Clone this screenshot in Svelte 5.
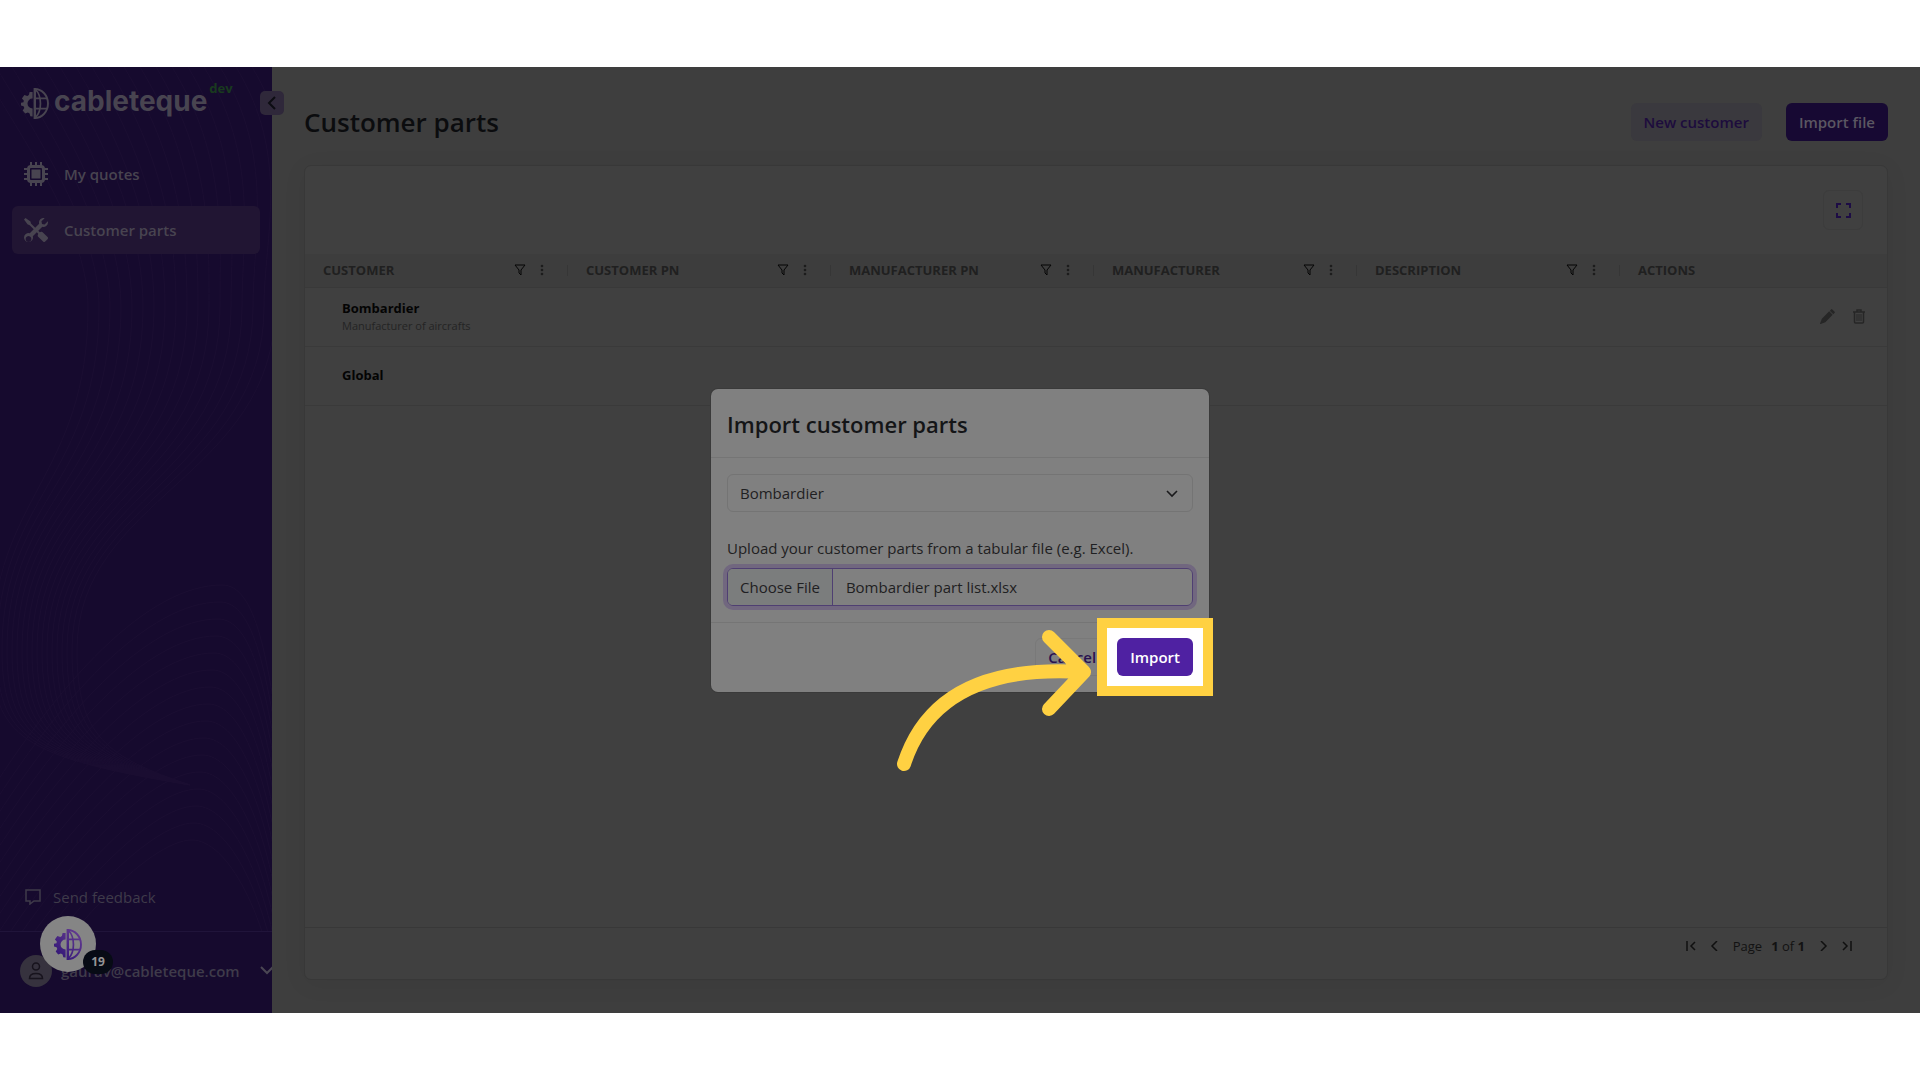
<script>
  import { onMount } from 'svelte';

  const columns = ['Customer', 'Customer PN', 'Manufacturer PN', 'Manufacturer', 'Description', 'Actions'];

  const customers = [
    { name: 'Bombardier', description: 'Manufacturer of aircrafts', editable: true },
    { name: 'Global', description: '', editable: false }
  ];

  let customer = $state('Bombardier');
  let fileInput;

  // Curves of the sidebar background
  const waves = Array.from({ length: 18 }, (_, i) => {
    const a = i * 16 - 20;
    const b = 88 + i * 11;
    const c = i * 5 - 8;
    return `M${a} 0C${a + 55} 90 ${b} 170 ${b} 240C${b} 410 ${c} 430 ${c} 583C${c} 670 ${c + 30} 690 190 718`;
  });
  const hills = Array.from({ length: 16 }, (_, j) => {
    const y = 518 + j * 17;
    const x = 222 - j * 2;
    return `M-30 ${y + 240}C60 ${y + 90} 150 ${y} ${x} ${y}C${x + 34} ${y} 268 ${y + 70} 284 ${y + 190}`;
  });

  // Preselect the part list in the file box
  onMount(() => {
    const transfer = new DataTransfer();
    transfer.items.add(new File(['parts'], 'Bombardier part list.xlsx'));
    fileInput.files = transfer.files;
  });
</script>

{#snippet logo(fill)}
  <svg class="logo-mark" viewBox="0 0 28 31" aria-hidden="true">
    <defs>
      <linearGradient id="brand" gradientUnits="userSpaceOnUse" x1="0" y1="31" x2="28" y2="0">
        <stop offset="0" stop-color="#2b1173" />
        <stop offset="1" stop-color="#6a3f94" />
      </linearGradient>
    </defs>
    <path
      {fill}
      d="M11.6 4H8.600L7.900 7 6.300 8 3.400 7 .900 10.600 2.800 12.600 2.500 14.200 0 14.800V17.400l2.600.8.7 1.800-1.600 2.400 2.500 3.200 2.700-1 1.700 1 .7 2.700 2.300.2V20.600a5.100 5.100 0 0 1 0-10.200z"
    />
    <g fill="none" stroke={fill}>
      <path stroke-width="2.400" d="M13.800 0v31" />
      <path stroke-width="1.900" d="M13.800 1a13.200 14.500 0 0 1 0 29" />
      <path stroke-width="1.700" d="M14.500 1.500c6.600 6.500 6.600 21.500 0 28M14 10.300h12M14 20.700h12" />
    </g>
  </svg>
{/snippet}

<div class="page">
  <div class="stage">
    <aside class="sidebar">
      <svg class="waves" viewBox="0 0 272 946" preserveAspectRatio="xMinYMin slice" aria-hidden="true">
        {#each waves as d}<path {d} />{/each}
        {#each hills as d}<path {d} />{/each}
      </svg>

      <div class="brand">
        {@render logo('#484450')}
        <span class="brand-name">cableteque</span>
        <span class="brand-env">dev</span>
      </div>

      <button class="collapse" aria-label="Collapse sidebar">
        <svg width="10" height="14" viewBox="0 0 10 14"><path d="M8 1 2 7l6 6" /></svg>
      </button>

      <nav class="nav">
        <a class="nav-item" href="#quotes">
          <svg width="24" height="24" viewBox="0 0 24 24" fill="none" stroke="currentColor">
            <path stroke-width="2" d="M7 0v5M12 0v5M17 0v5M7 19v5M12 19v5M17 19v5M0 7h5M0 12h5M0 17h5M19 7h5M19 12h5M19 17h5" />
            <rect x="4.500" y="4.500" width="15" height="15" rx="2.500" stroke-width="3" />
            <rect x="7.500" y="7.500" width="9" height="9" fill="currentColor" stroke="none" />
          </svg>
          My quotes
        </a>
        <a class="nav-item active" href="#parts">
          <svg width="24" height="24" viewBox="0 0 16 16" fill="currentColor">
            <path d="M1 0 0 1l2.200 3.081a1 1 0 0 0 .815.419h.07a1 1 0 0 1 .708.293l2.675 2.675-2.617 2.654A3.003 3.003 0 0 0 0 13a3 3 0 1 0 5.878-.851l2.654-2.617.968.968-.305.914a1 1 0 0 0 .242 1.023l3.270 3.270a.997.997 0 0 0 1.414 0l1.586-1.586a.997.997 0 0 0 0-1.414l-3.270-3.270a1 1 0 0 0-1.023-.242L10.500 9.500l-.960-.960 2.680-2.643A3.005 3.005 0 0 0 16 3q0-.405-.102-.777l-2.140 2.141L12 4l-.364-1.757L13.777.102a3 3 0 0 0-3.675 3.680L7.462 6.460 4.793 3.793a1 1 0 0 1-.293-.707v-.071a1 1 0 0 0-.419-.814zM3 12l.471.242.529.026.287.445.445.287.026.529L5 14l-.242.471-.026.529-.445.287-.287.445-.529.026L3 16l-.471-.242L2 15.732l-.287-.445L1.268 15l-.026-.529L1 14l.242-.471.026-.529.445-.287.287-.445.529-.026z" />
          </svg>
          Customer parts
        </a>
      </nav>

      <a class="feedback" href="#feedback">
        <svg width="16" height="16" viewBox="0 0 16 16" fill="none" stroke="currentColor" stroke-width="1.500">
          <path d="M1 1h14v11H9l-4 3v-3H1z" />
        </svg>
        Send feedback
      </a>

      <button class="user">
        <span class="avatar">
          <svg width="16" height="18" viewBox="0 0 16 18" fill="none" stroke="currentColor" stroke-width="1.500">
            <circle cx="8" cy="4.500" r="3.500" />
            <path d="M1.500 16.500c0-3.500 2.700-5 6.500-5s6.500 1.500 6.500 5z" />
          </svg>
        </span>
        <span class="user-name">gaurav@cableteque.com</span>
        <svg class="user-caret" width="14" height="9" viewBox="0 0 14 9"><path d="m1 1 6 6 6-6" /></svg>
      </button>

      <button class="launcher" aria-label="Help centre, 19 new">
        {@render logo('url(#brand)')}
        <span class="launcher-count">19</span>
      </button>
    </aside>

    <main class="content">
      <header class="heading">
        <h1>Customer parts</h1>
        <button class="btn btn-light">New customer</button>
        <button class="btn btn-dark">Import file</button>
      </header>

      <section class="card">
        <div class="toolbar">
          <button class="expand" aria-label="Full screen">
            <svg width="15" height="15" viewBox="0 0 15 15"><path d="M1 5V1h4M10 1h4v4M14 10v4h-4M5 14H1v-4" /></svg>
          </button>
        </div>

        <div class="grid">
          <table>
            <thead>
              <tr>
                {#each columns as column, i}
                  <th>
                    <div class="head-cell">
                      <span class="head-text">{column}</span>
                      {#if i < columns.length - 1}
                        <svg class="filter" width="12" height="12" viewBox="0 0 12 12"><path d="M1 1h10L7 6v5L5 9V6z" /></svg>
                        <svg class="dots" width="4" height="12" viewBox="0 0 4 12">
                          <circle cx="2" cy="2" r="1.300" /><circle cx="2" cy="6" r="1.300" /><circle cx="2" cy="10" r="1.300" />
                        </svg>
                        <span class="divider"></span>
                      {/if}
                    </div>
                  </th>
                {/each}
              </tr>
            </thead>
            <tbody>
              {#each customers as row}
                <tr>
                  <td class="customer" colspan="5">
                    <strong>{row.name}</strong>
                    {#if row.description}<small>{row.description}</small>{/if}
                  </td>
                  <td>
                    {#if row.editable}
                      <div class="actions">
                        <button class="icon-btn" aria-label="Edit {row.name}">
                          <svg width="15" height="15" viewBox="0 0 16 16" fill="currentColor">
                            <path d="M12.854.146a.5.5 0 0 0-.707 0L10.500 1.793 14.207 5.500l1.647-1.646a.5.5 0 0 0 0-.708zm.646 6.061L9.793 2.500 2 10.300.050 15.350a.5.5 0 0 0 .65.65L5.700 14z" />
                          </svg>
                        </button>
                        <button class="icon-btn" aria-label="Delete {row.name}">
                          <svg width="12" height="15" viewBox="0 0 12 15" fill="none" stroke="currentColor">
                            <path stroke-width="1.500" d="M0 3h12M4 2.500V1h4v1.500M1.500 3v10q0 1 1 1h7q1 0 1-1V3" />
                            <path d="M4 5v7M6 5v7M8 5v7" />
                          </svg>
                        </button>
                      </div>
                    {/if}
                  </td>
                </tr>
              {/each}
            </tbody>
          </table>
        </div>

        <footer class="pager">
          <button class="page-btn" aria-label="First page"><svg width="10" height="10" viewBox="0 0 10 10"><path d="M1 0v10M9 1 5 5l4 4" /></svg></button>
          <button class="page-btn" aria-label="Previous page"><svg width="10" height="10" viewBox="0 0 10 10"><path d="M7 0 2 5l5 5" /></svg></button>
          <span class="page-label">Page</span>
          <span class="page-count"><b>1</b> of <b>1</b></span>
          <button class="page-btn" aria-label="Next page"><svg width="10" height="10" viewBox="0 0 10 10"><path d="m3 0 5 5-5 5" /></svg></button>
          <button class="page-btn" aria-label="Last page"><svg width="10" height="10" viewBox="0 0 10 10"><path d="M9 0v10M1 1l4 4-4 4" /></svg></button>
        </footer>
      </section>
    </main>

    <div class="overlay">
      <div class="modal" role="dialog" aria-labelledby="modal-title">
        <header class="modal-head"><h2 id="modal-title">Import customer parts</h2></header>
        <div class="modal-body">
          <div class="select-box">
            <select bind:value={customer} aria-label="Customer">
              {#each customers as row}<option>{row.name}</option>{/each}
            </select>
            <svg width="12" height="8" viewBox="0 0 12 8"><path d="m1 1 5 5 5-5" /></svg>
          </div>
          <label for="parts-file">Upload your customer parts from a tabular file (e.g. Excel).</label>
          <input id="parts-file" type="file" bind:this={fileInput} />
        </div>
        <footer class="modal-foot">
          <button class="btn btn-cancel">Cancel</button>
          <div class="spotlight">
            <svg class="arrow" width="200" height="156" viewBox="0 0 200 156" aria-hidden="true">
              <path d="M9 146C29 84 83 47 189 54M154 19l35 35-35 37" />
            </svg>
            <button class="btn btn-import">Import</button>
          </div>
        </footer>
      </div>
    </div>
  </div>
</div>

<style>
  :global(body) {
    margin: 0;
    background: #fff;
  }

  .page {
    box-sizing: border-box;
    min-height: 100vh;
    padding: 67px 0;
    display: flex;
    font-family: "Open Sans", "Noto Sans", sans-serif;
    font-size: 15px;
    line-height: 24px;
  }

  .page :global(*) {
    box-sizing: border-box;
  }

  button,
  select,
  input {
    font: inherit;
    margin: 0;
  }

  button {
    border: none;
    padding: 0;
    background: none;
    cursor: pointer;
  }

  svg {
    display: block;
    flex: none;
  }

  .stage {
    position: relative;
    flex: 1;
    display: flex;
    background: #3e3e3e;
  }

  /* Sidebar */
  .sidebar {
    position: relative;
    flex: none;
    width: 272px;
    display: flex;
    flex-direction: column;
    background: #160a2e;
  }

  .waves {
    position: absolute;
    inset: 0;
    width: 100%;
    height: 100%;
    fill: none;
    stroke: #1b0e32;
    stroke-width: 1;
  }

  .brand {
    position: relative;
    display: flex;
    align-items: center;
    height: 66px;
    padding: 6px 0 0 21px;
    margin-bottom: 17px;
    color: #484450;
  }

  .logo-mark {
    width: 28px;
    height: 31px;
  }

  .brand-name {
    margin: -4px 0 0 5px;
    font-family: Inter, "Open Sans", sans-serif;
    font-size: 28px;
    font-weight: 700;
  }

  .brand-env {
    align-self: flex-start;
    margin: 3px 0 0 2px;
    font-size: 13px;
    font-weight: 700;
    color: #193a1e;
  }

  .collapse {
    position: absolute;
    top: 24px;
    right: -12px;
    width: 24px;
    height: 24px;
    display: flex;
    align-items: center;
    justify-content: center;
    border-radius: 5px;
    background: #2f283a;
  }

  .collapse path {
    fill: none;
    stroke: #0c0c12;
    stroke-width: 2;
  }

  .nav {
    position: relative;
    flex: 1;
    display: flex;
    flex-direction: column;
    gap: 8px;
    padding: 0 12px;
  }

  .nav-item {
    display: flex;
    align-items: center;
    gap: 16px;
    height: 48px;
    padding: 0 12px;
    border-radius: 6px;
    font-weight: 600;
    color: #484450;
    text-decoration: none;
  }

  .nav-item.active {
    background: #211533;
  }

  .feedback {
    position: relative;
    display: flex;
    align-items: center;
    gap: 12px;
    padding: 0 25px;
    margin-bottom: 22px;
    color: #3f3b4a;
    text-decoration: none;
  }

  .user {
    position: relative;
    display: flex;
    align-items: center;
    height: 82px;
    padding: 0 0 4px 20px;
    overflow: hidden;
    border-top: 1px solid #20143a;
    background: #160a2e;
    font-weight: 600;
    color: #3f3b4a;
  }

  .avatar {
    flex: none;
    width: 32px;
    height: 32px;
    display: flex;
    align-items: center;
    justify-content: center;
    border-radius: 50%;
    background: #36323e;
    color: #17131d;
  }

  .user-name {
    flex: none;
    width: 199px;
    margin-left: 9px;
    text-align: left;
  }

  .user-caret path {
    fill: none;
    stroke: #4a4653;
    stroke-width: 2;
  }

  .launcher {
    position: absolute;
    left: 40px;
    bottom: 41px;
    width: 56px;
    height: 56px;
    display: flex;
    align-items: center;
    justify-content: center;
    border-radius: 50%;
    background: #858585;
  }

  .launcher-count {
    position: absolute;
    right: -17px;
    bottom: -2px;
    width: 30px;
    height: 24px;
    border-radius: 12px;
    background: #070b15;
    font-size: 12px;
    font-weight: 700;
    color: #959595;
  }

  /* Main area */
  .content {
    flex: 1;
    min-width: 0;
    display: flex;
    flex-direction: column;
    padding: 36px 32px 33px;
  }

  .heading {
    display: flex;
    align-items: center;
    gap: 24px;
    margin-bottom: 24px;
  }

  h1,
  h2 {
    margin: 0;
    font-weight: 600;
  }

  h1 {
    flex: 1;
    font-size: 26px;
    color: #0b0c0e;
  }

  .btn {
    height: 38px;
    padding: 0 12px;
    border: 1px solid transparent;
    border-radius: 6px;
    font-weight: 600;
  }

  .btn-light {
    background: #3a393e;
    color: #1d0c3d;
  }

  .btn-dark {
    background: #170933;
    color: #5b5762;
  }

  .card {
    flex: 1;
    display: flex;
    flex-direction: column;
    border: 1px solid #383838;
    border-radius: 7px;
    background: #404040;
    box-shadow: 0 4px 24px rgba(0, 0, 0, 0.06);
  }

  .toolbar {
    display: flex;
    justify-content: flex-end;
    padding: 24px;
  }

  .expand {
    width: 40px;
    height: 40px;
    display: flex;
    align-items: center;
    justify-content: center;
    border: 1px solid #3c3c3c;
    border-radius: 6px;
  }

  .expand path {
    fill: none;
    stroke: #1d0c45;
    stroke-width: 2;
  }

  .grid {
    flex: 1;
  }

  table {
    width: 100%;
    table-layout: fixed;
    border-collapse: collapse;
  }

  th {
    width: 263px;
    height: 33px;
    padding: 0;
    border-bottom: 1px solid #393939;
    background: #3d3d3d;
  }

  th:last-child {
    width: auto;
  }

  .head-cell {
    display: flex;
    align-items: center;
    padding-left: 18px;
  }

  .head-text {
    flex: 1;
    font-size: 13px;
    text-align: left;
    text-transform: uppercase;
    color: #202020;
  }

  .filter {
    fill: none;
    stroke: #050505;
    stroke-width: 1;
  }

  .dots {
    margin: 0 23px 0 14px;
    fill: #1c1c1c;
  }

  .divider {
    width: 1px;
    height: 11px;
    background: #363636;
  }

  td {
    height: 59px;
    padding: 0;
    border-bottom: 1px solid #3a3a3a;
  }

  .customer {
    padding-left: 37px;
    line-height: 17px;
    color: #040404;
  }

  .customer strong,
  .customer small {
    display: block;
    font-size: 13px;
  }

  .customer small {
    font-size: 11px;
    color: #242424;
  }

  .actions {
    display: flex;
    justify-content: flex-end;
    gap: 18px;
    padding-right: 22px;
  }

  .icon-btn {
    color: #262626;
  }

  .pager {
    display: flex;
    align-items: center;
    justify-content: flex-end;
    gap: 12px;
    height: 52px;
    padding: 0 34px 16px 0;
    border-top: 1px solid #383838;
    font-size: 13px;
    color: #121212;
  }

  .page-label {
    margin-right: -3px;
  }

  .page-btn {
    width: 12px;
    display: flex;
    justify-content: center;
  }

  .page-btn path {
    fill: none;
    stroke: #101010;
    stroke-width: 1.5;
  }

  /* Import dialog */
  .overlay {
    position: absolute;
    inset: 0;
    display: flex;
    align-items: center;
    justify-content: center;
  }

  .modal {
    width: 498px;
    border-radius: 7px;
    background: #808080;
    box-shadow: 0 0 0 1px #3a3a3a;
    color: #1f2022;
  }

  .modal-head {
    padding: 20px 16px 18px;
    border-bottom: 1px solid #757575;
  }

  h2 {
    font-size: 22px;
    line-height: 30px;
    color: #141517;
  }

  .modal-body {
    display: flex;
    flex-direction: column;
    padding: 16px;
  }

  .select-box {
    position: relative;
    margin-bottom: 24px;
  }

  .select-box svg {
    position: absolute;
    top: 16px;
    right: 15px;
    pointer-events: none;
  }

  .select-box path {
    fill: none;
    stroke: #1a1a1c;
    stroke-width: 1.6;
  }

  select {
    display: block;
    width: 100%;
    height: 38px;
    padding: 0 12px;
    appearance: none;
    border: 1px solid #747474;
    border-radius: 6px;
    background: #808080;
    color: inherit;
  }

  label {
    margin-bottom: 8px;
  }

  input[type='file'] {
    width: 100%;
    height: 38px;
    overflow: hidden;
    border: 1px solid #4f3f72;
    border-radius: 6px;
    box-shadow: 0 0 0 4px #71677f;
    line-height: 36px;
    color: inherit;
  }

  input::file-selector-button {
    height: 36px;
    margin: 0 13px 0 0;
    padding: 0 12px;
    border: none;
    border-right: 1px solid #4f3f72;
    background: #7b7d7d;
    font: inherit;
    color: inherit;
  }

  .modal-foot {
    display: flex;
    justify-content: flex-end;
    gap: 8px;
    padding: 15px 16px 16px;
    border-top: 1px solid #757575;
  }

  .btn-cancel {
    border-color: #797979;
    color: #28114f;
  }

  .spotlight {
    position: relative;
  }

  /* Highlight frame round the button */
  .spotlight::before {
    content: '';
    position: absolute;
    inset: -20px;
    border: 10px solid #ffd142;
    background: #fff;
  }

  .arrow {
    position: absolute;
    right: 98px;
    top: -20px;
    pointer-events: none;
  }

  .arrow path {
    fill: none;
    stroke: #ffd142;
    stroke-width: 14;
    stroke-linecap: round;
    stroke-linejoin: round;
  }

  .btn-import {
    position: relative;
    background: #4f21a2;
    color: #fff;
  }
</style>
